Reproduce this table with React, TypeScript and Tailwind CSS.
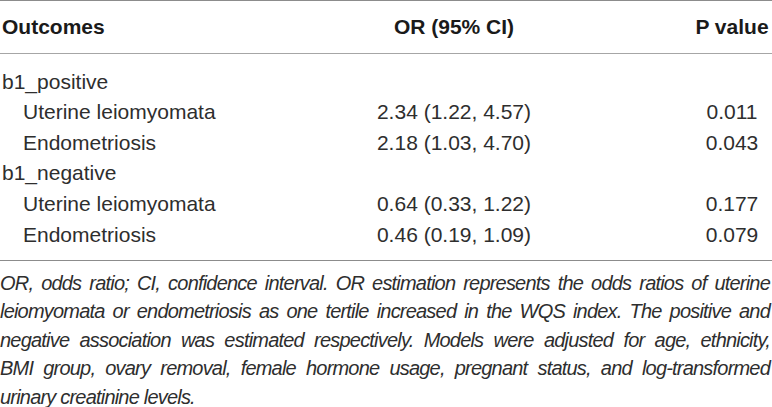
import React from 'react';

const rows = [
  { label: 'b1_positive', group: true },
  { label: 'Uterine leiomyomata', or: '2.34 (1.22, 4.57)', p: '0.011' },
  { label: 'Endometriosis', or: '2.18 (1.03, 4.70)', p: '0.043' },
  { label: 'b1_negative', group: true },
  { label: 'Uterine leiomyomata', or: '0.64 (0.33, 1.22)', p: '0.177' },
  { label: 'Endometriosis', or: '0.46 (0.19, 1.09)', p: '0.079' },
];

const notes = [
  'OR, odds ratio; CI, confidence interval. OR estimation represents the odds ratios of uterine',
  'leiomyomata or endometriosis as one tertile increased in the WQS index. The positive and',
  'negative association was estimated respectively. Models were adjusted for age, ethnicity,',
  'BMI group, ovary removal, female hormone usage, pregnant status, and log-transformed',
];

export default function App() {
  return (
    <div className="w-[772px] h-[407px] bg-white overflow-hidden font-['Liberation_Sans',Arial,sans-serif]">
      <div className="border-t border-[#8c8c8c]">
        <div className="flex items-center h-[53px] border-b border-[#a6a6a6] text-[21px] font-bold text-[#1a1a1a]">
          <div className="w-[339px] pl-[2px]">Outcomes</div>
          <div className="w-[230px] text-center">OR (95% CI)</div>
          <div className="ml-auto w-[80px] text-center">P value</div>
        </div>
      </div>

      <div className="pt-[12px] pb-[10px] border-b border-[#8c8c8c] text-[21px] text-[#2e2e2e]">
        {rows.map((r, i) => (
          <div key={i} className="flex items-center h-[30.6px]">
            <div className={r.group ? 'w-[339px] pl-[2px]' : 'w-[339px] pl-[23px]'}>{r.label}</div>
            <div className="w-[230px] text-center">{r.or}</div>
            <div className="ml-auto w-[80px] text-center">{r.p}</div>
          </div>
        ))}
      </div>

      <div className="pt-[8px] text-[20px] leading-[28.5px] italic tracking-[-0.8px] text-[#2e2e2e]">
        {notes.map((n, i) => (
          <div key={i} className="text-justify [text-align-last:justify] pr-[2px]">
            {n}
          </div>
        ))}
        <div>urinary creatinine levels.</div>
      </div>
    </div>
  );
}
